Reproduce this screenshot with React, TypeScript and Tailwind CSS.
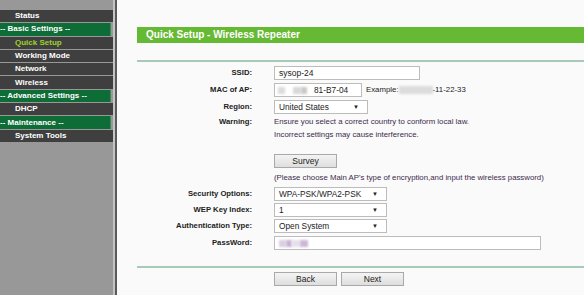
import React from 'react';

const menu = [
  { label: 'Status', kind: 'item' },
  { label: '-- Basic Settings --', kind: 'head' },
  { label: 'Quick Setup', kind: 'item', active: true },
  { label: 'Working Mode', kind: 'item' },
  { label: 'Network', kind: 'item' },
  { label: 'Wireless', kind: 'item' },
  { label: '-- Advanced Settings --', kind: 'head' },
  { label: 'DHCP', kind: 'item' },
  { label: '-- Maintenance --', kind: 'head' },
  { label: 'System Tools', kind: 'item' },
];

const font = { fontFamily: '"Liberation Sans", Arial, sans-serif' };

const Row = ({ label, children, className = '' }) => (
  <div className={`flex items-center ${className}`}>
    <div className="w-[116px] text-right text-[7.7px] font-bold text-[#222] pr-px">{label}</div>
    <div className="ml-[21px] flex items-center">{children}</div>
  </div>
);

const Select = ({ value, width }) => (
  <div
    className={`${width} h-[14px] bg-white border border-[#bcbcbc] flex items-center justify-between pl-[4px] pr-[8px] text-[8.3px] text-[#222]`}
  >
    <span>{value}</span>
    <span className="text-[6px]">▼</span>
  </div>
);

const Btn = ({ children }) => (
  <div className="w-[63px] h-[14px] border border-[#a9a9a9] bg-gradient-to-b from-[#f4f4f4] to-[#dedede] flex items-center justify-center text-[8.5px] text-[#222]">
    {children}
  </div>
);

export default function App() {
  return (
    <div className="flex w-[584px] h-[295px] overflow-hidden" style={font}>
      {/* Sidebar */}
      <div className="w-[113px] bg-[#989898] pt-[10px] flex flex-col gap-px">
        {menu.map((m) => (
          <div
            key={m.label}
            className={`h-[12.3px] flex items-center text-[8px] font-bold whitespace-nowrap ${
              m.kind === 'head'
                ? 'bg-[#0e6c37] text-white pl-0 mr-[2px] border-r border-[#3d8a5c]'
                : 'bg-[#3f3f3f] pl-[15px]'
            } ${m.kind === 'item' ? (m.active ? 'text-[#9fd12a]' : 'text-white') : ''}`}
          >
            {m.label}
          </div>
        ))}
      </div>
      <div className="w-[2px] bg-[#c4c4c4]" />
      <div className="w-[2px] bg-[#5a5a5a]" />

      {/* Content */}
      <div className="flex-1 bg-[#fafafa] pt-[27px] pl-[20px]">
        <div className="h-[16px] bg-[#66b933] text-white font-bold text-[10px] leading-[16px] pl-[9px]">
          Quick Setup - Wireless Repeater
        </div>
        <div className="mt-[17px] h-[2px] bg-[#a8cbb8]" />

        <div className="pt-[4px]">
          <Row label="SSID:">
            <div className="w-[146px] h-[14px] bg-white border border-[#bcbcbc] pl-[4px] text-[8.5px] leading-[12px] text-[#222]">
              sysop-24
            </div>
          </Row>
          <Row label="MAC of AP:" className="mt-[3px]">
            <div className="w-[88px] h-[14px] bg-white border border-[#bcbcbc] flex items-center pl-[3px] text-[8.3px] text-[#222]">
              <span className="w-[7px] h-[7px] bg-[#dcdcdc] blur-[1px]" />
              <span className="ml-[8px] w-[8px] h-[7px] bg-[#d8d8d8] blur-[1px]" />
              <span className="w-[6px] h-[7px] bg-[#c9c9c9] blur-[1px]" />
              <span className="ml-[7px]">81-B7-04</span>
            </div>
            <div className="ml-[4px] flex items-center text-[7.8px] text-[#222]">
              <span>Example:</span>
              <span className="w-[34px] h-[8px] bg-[#dcdcdc] blur-[1px]" />
              <span>-11-22-33</span>
            </div>
          </Row>
          <Row label="Region:" className="mt-[3px]">
            <Select value="United States" width="w-[94px]" />
          </Row>
          <div className="flex mt-[1px]">
            <div className="w-[116px] text-right text-[7.7px] font-bold text-[#222] leading-[13px] pr-px">Warning:</div>
            <div className="ml-[21px] text-[7.8px] leading-[13px] text-[#3a2b4a]">
              Ensure you select a correct country to conform local law.
              <br />
              Incorrect settings may cause interference.
            </div>
          </div>

          <div className="ml-[137px] mt-[13px]">
            <Btn>Survey</Btn>
          </div>
          <div className="ml-[137px] mt-[4px] text-[7.8px] leading-[12px] text-[#3a2b4a] whitespace-nowrap">
            (Please choose Main AP's type of encryption,and input the wireless password)
          </div>

          <Row label="Security Options:" className="mt-[3px]">
            <Select value="WPA-PSK/WPA2-PSK" width="w-[113px]" />
          </Row>
          <Row label="WEP Key Index:" className="mt-[2px]">
            <Select value="1" width="w-[113px]" />
          </Row>
          <Row label="Authentication Type:" className="mt-[2px]">
            <Select value="Open System" width="w-[113px]" />
          </Row>
          <Row label="PassWord:" className="mt-[3px]">
            <div className="w-[267px] h-[14px] bg-white border border-[#bcbcbc] flex items-center pl-[4px]">
              <span className="w-[7px] h-[7px] bg-[#d9cfe0] blur-[1px]" />
              <span className="w-[6px] h-[7px] bg-[#c9b3d3] blur-[1px]" />
              <span className="w-[8px] h-[7px] bg-[#e6e0ea] blur-[1px]" />
              <span className="w-[8px] h-[7px] bg-[#cdb7d6] blur-[1px]" />
            </div>
          </Row>
        </div>

        <div className="mt-[16px] h-[2px] bg-[#a8cbb8]" />
        <div className="ml-[137px] mt-[4px] flex gap-[4px]">
          <Btn>Back</Btn>
          <Btn>Next</Btn>
        </div>
      </div>
    </div>
  );
}
